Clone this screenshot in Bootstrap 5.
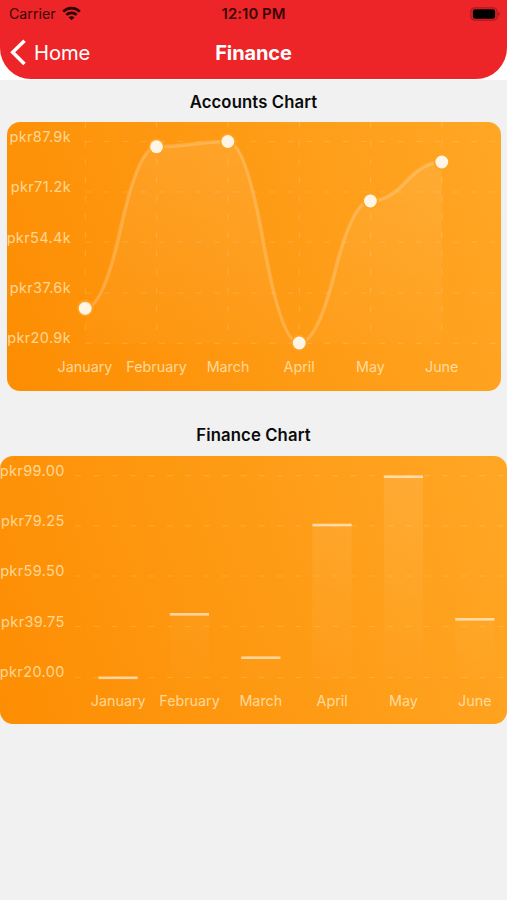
<!DOCTYPE html>
<html lang="en">
<head>
<meta charset="utf-8">
<meta name="viewport" content="width=device-width, initial-scale=1">
<title>Finance</title>
<link href="https://cdn.jsdelivr.net/npm/bootstrap@5.3.0/dist/css/bootstrap.min.css" rel="stylesheet">
<style>
body { background: #f1f1f1; font-family: Inter, "Liberation Sans", sans-serif; min-height: 100vh; color: #0b0b0c; overflow-x: hidden; }
.app-top { background: #fff; height: 80px; }
.app-red { background: #ed2529; height: 79px; border-radius: 0 0 31px 31px; }
.status-bar { height: 27px; padding: 0 6px 0 9px; font-size: 14.2px; color: #3a0507; }
.status-time { font-weight: 600; font-size: 14.8px; letter-spacing: .1px; margin-right: 3px; padding-top: 2px; }
.wifi { margin-left: -2px; }
.title-bar { height: 52px; padding: 0 10px; color: #fff; }
.back-link { font-size: 20.2px; letter-spacing: -.1px; line-height: 27px; color: #fff; gap: 7px; margin-top: 4px; }
.back-link span { padding-top: 1px; }
.page-title { font-size: 20px; font-weight: 700; letter-spacing: -.1px; }
.chart-title { font-size: 16.7px; font-weight: 600; line-height: 20px; letter-spacing: .12px; }
.line-heading { padding-top: 12px; height: 32px; }
.chart-card { border-radius: 13px; background: transparent; }
.line-card { margin: 10px 6px 0 7px; }
.bar-heading { margin-top: 34.5px; }
.bar-card { margin-top: 10.5px; }
.chart-card text { fill: #fff6d6; fill-opacity: .7; font-size: 14.3px; }
.chart-card .value-labels text { font-size: 14.5px; letter-spacing: .36px; }
.grid-rule { stroke: #fff; stroke-opacity: .14; stroke-width: 1.2; stroke-dasharray: 6.12 12.25; fill: none; }
</style>
<script src="https://cdn.jsdelivr.net/npm/bootstrap@5.3.0/dist/js/bootstrap.bundle.min.js"></script>
</head>
<body>
<header class="app-top">
  <div class="app-red">
    <div class="status-bar row g-0 align-items-center">
      <div class="col d-flex align-items-center gap-2">
        <span>Carrier</span>
        <svg class="wifi" width="19" height="15" viewBox="0 0 19 15"><g fill="none" stroke="#2c0405" stroke-width="2.7"><path d="M1.2 5.6C5.8.9 13.2.9 17.8 5.6"/><path d="M4.3 8.9c2.9-2.8 7.5-2.8 10.4 0"/></g><path fill="#2c0405" d="M9.5 14.3 6.5 11.3c1.7-1.5 4.3-1.5 6 0z"/></svg>
      </div>
      <div class="col-auto status-time">12:10 PM</div>
      <div class="col d-flex justify-content-end">
        <svg width="31" height="14" viewBox="0 0 31 14"><rect x=".9" y=".9" width="26.2" height="12.2" rx="3.8" fill="none" stroke="#a81a1d" stroke-width="1.2"/><rect x="2.8" y="2.3" width="22.4" height="9.4" rx="2.3" fill="#000"/><path d="M28.5 5v4.2c1.5-.6 1.500-3.600 0-4.200z" fill="#8f1518"/></svg>
      </div>
    </div>
    <nav class="title-bar row g-0 align-items-center">
      <div class="col">
        <a class="back-link d-inline-flex align-items-center text-decoration-none" href="#">
          <svg width="17" height="27" viewBox="0 0 17 27"><path d="M14.5 1.7 2.7 13.300 14.500 25" fill="none" stroke="#fff" stroke-width="3.5"/></svg>
          <span>Home</span>
        </a>
      </div>
      <div class="col-auto page-title">Finance</div>
      <div class="col"></div>
    </nav>
  </div>
</header>
<main>
  <h2 class="line-heading chart-title text-center mb-0">Accounts Chart</h2>
  <section class="chart-card line-card card border-0 overflow-hidden">
    <svg class="d-block w-100" viewBox="7 122 494 268.5" height="268.5">
      <defs>
        <linearGradient id="lineBg" gradientUnits="userSpaceOnUse" x1="7" y1="345" x2="501" y2="167"><stop offset="0" stop-color="#fd8e03"/><stop offset="1" stop-color="#ffa624"/></linearGradient>
        <linearGradient id="areaFade" gradientUnits="userSpaceOnUse" x1="0" y1="122" x2="0" y2="390"><stop offset="0" stop-color="#fff" stop-opacity=".1"/><stop offset="1" stop-color="#fff" stop-opacity="0"/></linearGradient>
      </defs>
      <rect x="7" y="122" width="494" height="269" fill="url(#lineBg)"/>
      <path class="grid-rule" d="M85.4 141.5H501M85.4 192H501M85.4 242H501M85.4 293H501M85.4 343.3H501"/>
      <path class="grid-rule" d="M85.4 122V330M156.7 122V330M228 122V330M299.3 122V330M370.6 122V330M441.9 122V330"/>
      <path id="area" fill="url(#areaFade)"/>
      <path id="curve" fill="none" stroke="#fff" stroke-opacity=".2" stroke-width="3.6"/>
      <g id="dots"></g>
      <g class="value-labels" text-anchor="end">
        <text x="71" y="141.5">pkr87.9k</text><text x="71" y="192">pkr71.2k</text><text x="71" y="242.5">pkr54.4k</text><text x="71" y="292.8">pkr37.6k</text><text x="71" y="343.3">pkr20.9k</text>
      </g>
      <g text-anchor="middle">
        <text x="85" y="372.3">January</text><text x="156.6" y="372.3">February</text><text x="228" y="372.3">March</text><text x="299.2" y="372.3">April</text><text x="370.5" y="372.3">May</text><text x="441.7" y="372.3">June</text>
      </g>
    </svg>
  </section>
  <h2 class="bar-heading chart-title text-center mb-0">Finance Chart</h2>
  <section class="chart-card bar-card card border-0 overflow-hidden">
    <svg class="d-block w-100" viewBox="0 455.5 507 268.5" height="268.5">
      <defs>
        <linearGradient id="barBg" gradientUnits="userSpaceOnUse" x1="0" y1="685" x2="507" y2="495"><stop offset="0" stop-color="#fd8e03"/><stop offset="1" stop-color="#ffa624"/></linearGradient>
        <linearGradient id="barFade" gradientUnits="userSpaceOnUse" x1="0" y1="455" x2="0" y2="700"><stop offset="0" stop-color="#fff" stop-opacity=".1"/><stop offset="1" stop-color="#fff" stop-opacity="0"/></linearGradient>
      </defs>
      <rect x="0" y="455" width="507" height="270" fill="url(#barBg)"/>
      <path class="grid-rule" d="M75 475.2H507M75 525.3H507M75 575.5H507M75 626H507M75 677H507"/>
      <g id="bars"></g>
      <g class="value-labels" text-anchor="end">
        <text x="64.7" y="475">pkr99.00</text><text x="64.7" y="525.4">pkr79.25</text><text x="64.7" y="575.7">pkr59.50</text><text x="64.7" y="626.2">pkr39.75</text><text x="64.7" y="676.6">pkr20.00</text>
      </g>
      <g text-anchor="middle">
        <text x="118.2" y="705.5">January</text><text x="189.5" y="705.5">February</text><text x="260.8" y="705.5">March</text><text x="332.2" y="705.5">April</text><text x="403.5" y="705.5">May</text><text x="474.8" y="705.5">June</text>
      </g>
    </svg>
  </section>
</main>
<script>
// Smooth line: two quadratic halves between each pair of points.
const points = [[85.2,308.3],[156.5,146.7],[227.8,141.5],[299.2,343],[370.4,201],[441.8,162]];
let d = `M${points[0]}`;
for (let i = 0; i < points.length - 1; i++) {
  const [x1, y1] = points[i], [x2, y2] = points[i + 1];
  const mx = (x1 + x2) / 2, my = (y1 + y2) / 2;
  d += `Q${(x1 + mx) / 2},${y1} ${mx},${my}Q${(mx + x2) / 2},${y2} ${x2},${y2}`;
}
document.getElementById('curve').setAttribute('d', d);
document.getElementById('area').setAttribute('d', d + 'V343.5H85.2Z');
document.getElementById('dots').innerHTML = points.map(([x, y]) =>
  `<circle cx="${x}" cy="${y}" r="8.2" fill="#ffa323"/><circle cx="${x}" cy="${y}" r="6.4" fill="#fff5e6"/>`).join('');
// Bars: a pale cap over a fading column.
document.getElementById('bars').innerHTML = [[98.5,677.3],[169.8,613.8],[241.2,657.2],[312.4,524.5],[383.8,476.2],[455.2,618.8]]
  .map(([x, y]) => `<rect x="${x}" y="${y}" width="39.2" height="${Math.max(0, 679 - y)}" fill="url(#barFade)"/><rect x="${x}" y="${y - 1.3}" width="39.2" height="2.6" fill="#fff" fill-opacity=".6"/>`).join('');
</script>
</body>
</html>
